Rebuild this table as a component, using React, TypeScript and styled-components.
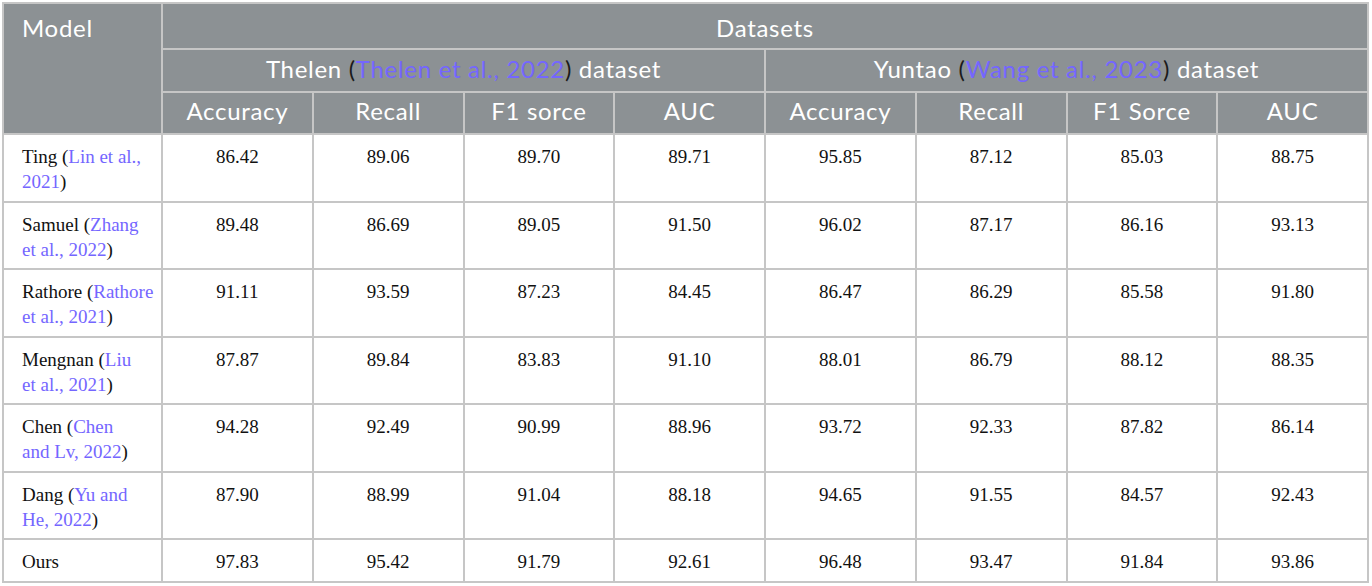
import React from "react";
import styled, { createGlobalStyle } from "styled-components";

const GlobalStyle = createGlobalStyle`
  html, body { margin: 0; padding: 0; background: #ffffff; }
  body { font-family: "Liberation Serif", serif; }
`;

const Wrap = styled.div`
  padding: 2px 0 0 2px;
`;

const Table = styled.table`
  width: 1367px;
  border-collapse: collapse;
  table-layout: fixed;
  border: 2px solid #c6c6c6;
`;

const HeadCell = styled.th<{ $align?: "left" | "center"; $pt: number; $pb: number }>`
  background: #8c9194;
  color: #ffffff;
  font-family: "Lato", "Open Sans", sans-serif;
  font-weight: 400;
  font-size: 24px;
  letter-spacing: 0.7px;
  line-height: 27px;
  padding: ${(p) => p.$pt}px 4px ${(p) => p.$pb}px ${(p) => (p.$align === "left" ? 18 : 4)}px;
  text-align: ${(p) => p.$align ?? "center"};
  vertical-align: top;
  border: 2px solid #c6c6c6;
  white-space: nowrap;
`;

const Paren = styled.span`
  color: #1a1a1a;
`;

const Ref = styled.span`
  color: #7466ff;
`;

const Cell = styled.td<{ $align?: "left" | "center" }>`
  font-family: "Liberation Serif", serif;
  font-size: 19px;
  line-height: 25px;
  color: #111111;
  padding: 9px 4px 6.5px ${(p) => (p.$align === "left" ? 18 : 4)}px;
  text-align: ${(p) => p.$align ?? "center"};
  vertical-align: top;
  border: 2px solid #c6c6c6;
`;

const Line = styled.span`
  display: block;
  white-space: nowrap;
`;

type Row = { name: string; refA?: string; refB?: string; vals: string[] };

const rows: Row[] = [
  { name: "Ting", refA: "Lin et al.,", refB: "2021", vals: ["86.42", "89.06", "89.70", "89.71", "95.85", "87.12", "85.03", "88.75"] },
  { name: "Samuel", refA: "Zhang", refB: "et al., 2022", vals: ["89.48", "86.69", "89.05", "91.50", "96.02", "87.17", "86.16", "93.13"] },
  { name: "Rathore", refA: "Rathore", refB: "et al., 2021", vals: ["91.11", "93.59", "87.23", "84.45", "86.47", "86.29", "85.58", "91.80"] },
  { name: "Mengnan", refA: "Liu", refB: "et al., 2021", vals: ["87.87", "89.84", "83.83", "91.10", "88.01", "86.79", "88.12", "88.35"] },
  { name: "Chen", refA: "Chen", refB: "and Lv, 2022", vals: ["94.28", "92.49", "90.99", "88.96", "93.72", "92.33", "87.82", "86.14"] },
  { name: "Dang", refA: "Yu and", refB: "He, 2022", vals: ["87.90", "88.99", "91.04", "88.18", "94.65", "91.55", "84.57", "92.43"] },
  { name: "Ours", vals: ["97.83", "95.42", "91.79", "92.61", "96.48", "93.47", "91.84", "93.86"] },
];

const metrics1 = ["Accuracy", "Recall", "F1 sorce", "AUC"];
const metrics2 = ["Accuracy", "Recall", "F1 Sorce", "AUC"];

export default function App() {
  return (
    <>
      <GlobalStyle />
      <Wrap>
        <Table>
          <colgroup>
            <col style={{ width: 159 }} />
            {Array.from({ length: 8 }).map((_, i) => (
              <col key={i} />
            ))}
          </colgroup>
          <thead>
            <tr>
              <HeadCell rowSpan={3} $align="left" $pt={10} $pb={7}>
                Model
              </HeadCell>
              <HeadCell colSpan={8} $pt={10} $pb={7}>
                Datasets
              </HeadCell>
            </tr>
            <tr>
              <HeadCell colSpan={4} $pt={5} $pb={9}>
                Thelen <Paren>(</Paren>
                <Ref>Thelen et al., 2022</Ref>
                <Paren>)</Paren> dataset
              </HeadCell>
              <HeadCell colSpan={4} $pt={5} $pb={9}>
                Yuntao <Paren>(</Paren>
                <Ref>Wang et al., 2023</Ref>
                <Paren>)</Paren> dataset
              </HeadCell>
            </tr>
            <tr>
              {metrics1.map((m, i) => (
                <HeadCell key={"a" + i} $pt={4} $pb={9}>
                  {m}
                </HeadCell>
              ))}
              {metrics2.map((m, i) => (
                <HeadCell key={"b" + i} $pt={4} $pb={9}>
                  {m}
                </HeadCell>
              ))}
            </tr>
          </thead>
          <tbody>
            {rows.map((r) => (
              <tr key={r.name}>
                <Cell $align="left">
                  {r.refA ? (
                    <>
                      <Line>
                        {r.name} (<Ref>{r.refA}</Ref>
                      </Line>
                      <Line>
                        <Ref>{r.refB}</Ref>)
                      </Line>
                    </>
                  ) : (
                    <Line>{r.name}</Line>
                  )}
                </Cell>
                {r.vals.map((v, i) => (
                  <Cell key={i}>{v}</Cell>
                ))}
              </tr>
            ))}
          </tbody>
        </Table>
      </Wrap>
    </>
  );
}
